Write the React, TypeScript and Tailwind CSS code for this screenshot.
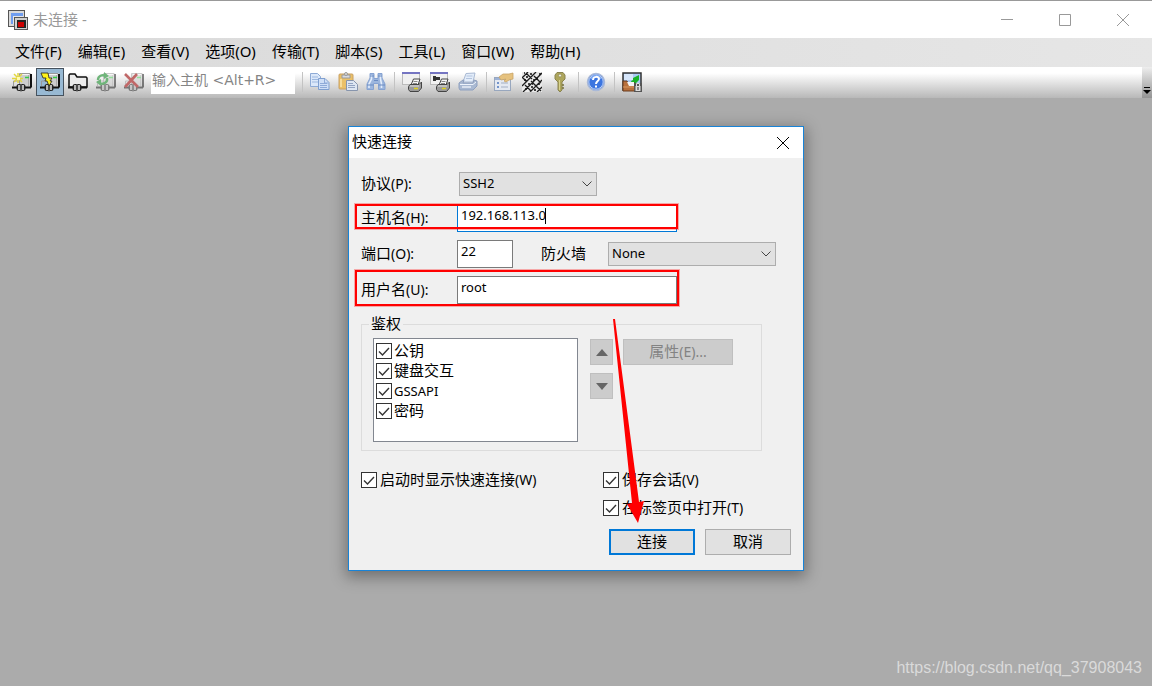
import type { ReactNode } from "react";

const menus = [
  "文件(F)",
  "编辑(E)",
  "查看(V)",
  "选项(O)",
  "传输(T)",
  "脚本(S)",
  "工具(L)",
  "窗口(W)",
  "帮助(H)",
];

const authMethods = ["公钥", "键盘交互", "GSSAPI", "密码"];

const Icon = ({ children }: { children: ReactNode }) => (
  <svg width="20" height="20" viewBox="0 0 20 20" aria-hidden="true">
    {children}
  </svg>
);

const Plug = () => (
  <g>
    <path d="M0 15.500h5M13 15.500h6" stroke="#111" strokeWidth="2" />
    <rect x="4.500" y="12" width="9" height="7" rx="2.500" fill="#222" />
    <path d="M7 13v5M11 13v5" stroke="#ddd" strokeWidth="1.600" />
    <path d="M9 12v8" stroke="#777" />
  </g>
);

const Host = () => (
  <g>
    <path d="M1.5 14V9h6" fill="none" stroke="#999" />
    <rect x="8" y="1" width="11" height="14" rx="1" fill="#cdcdcd" />
    <path d="M7.500 13V1.500H18" fill="none" stroke="#999" />
    <path d="M9 2.500h8" stroke="#f4f4f4" />
    <path d="M16.500 3v11" stroke="#aaa" />
    <path d="M19 2v13.500" stroke="#111" strokeWidth="2" />
    <path d="M13 5.500h4" stroke="#3c4" strokeWidth="1.500" />
    <Plug />
  </g>
);

const ConnectIcon = () => (
  <Icon>
    <Host />
    <path d="M6 1v10M0 6.500h11M2 2l8 8M10 2l-8 8" stroke="#e2d640" strokeWidth="1.500" />
    <path d="M5 5h3v3H5z" fill="#fffbb0" />
  </Icon>
);

const QuickConnectIcon = () => (
  <Icon>
    <Host />
    <path d="M1 1h7l1 5h3l-2 3h2l-3 5-2-5H5l1-3H3z" fill="#fff21a" stroke="#222" strokeWidth=".8" />
  </Icon>
);

const TabConnectIcon = () => (
  <Icon>
    <path d="M1 15V3l1-1h5l2 3h9l1 1v9z" fill="#ececec" stroke="#111" strokeWidth="1.500" />
    <Plug />
  </Icon>
);

const ReconnectIcon = () => (
  <Icon>
    <g opacity=".5">
      <Host />
    </g>
    <path d="M2 8c0-4 4-6 8-4M11 6c1 4-3 7-8 5" fill="none" stroke="#6fb57a" strokeWidth="2.400" />
    <path d="M8 0l5 4-5 3zM5 7v7L0 10z" fill="#6fb57a" />
  </Icon>
);

const DisconnectIcon = () => (
  <Icon>
    <g opacity=".5">
      <Host />
    </g>
    <path d="M1 2l13 13M13 2L1 15" stroke="#c06868" strokeWidth="2.600" />
  </Icon>
);

const CopyIcon = () => (
  <Icon>
    <path d="M.500 1.500h7l3 3v10H.500z" fill="#dbe8fa" stroke="#8eabd6" />
    <path d="M2 5h6M2 7.500h6M2 10h6" stroke="#9db8df" />
    <path d="M8.500 6.500h6.500l4 4v7H8.500z" fill="#cfdff7" stroke="#7f9fcf" />
    <path d="M10 11.500h7M10 13.500h7M10 15.500h7M14.500 7v4h4" fill="none" stroke="#8fabd8" />
  </Icon>
);

const PasteIcon = () => (
  <Icon>
    <rect x="1" y="2" width="14" height="15" rx="1" fill="#eac068" stroke="#c9a062" />
    <path d="M4 3h8v3H4z" fill="#d8dbe2" stroke="#9a9a9a" />
    <circle cx="8" cy="2" r="1.500" fill="#ddd" stroke="#999" />
    <path d="M3 7v8" stroke="#f6dc9b" strokeWidth="2" />
    <path d="M8.500 8.500h7l4 4v6h-11z" fill="#dde6f2" stroke="#8795ad" />
    <path d="M10 11.500h5M10 13.500h7M10 15.500h7" stroke="#93a4c2" />
  </Icon>
);

const FindIcon = () => (
  <Icon>
    <path
      d="M4 1.500h4v5h4v-5h4V6l3 6v5.500h-6.500v-6h-5v6H1V12l3-6z"
      fill="#9cb6de"
      stroke="#86a3d2"
    />
    <path d="M5.500 3v4L3 12v4M14.500 3v4l1 5v4" fill="none" stroke="#e3edfb" strokeWidth="1.600" />
    <path d="M1 13h6.500M12.500 13H19M8 8.500h4M4 4h4M12 4h4" stroke="#6b8cc2" />
  </Icon>
);

const SmallPrinter = () => (
  <g>
    <path d="M9 13l2.500-6h6.500l-2 6z" fill="#f6f6f6" stroke="#444" />
    <path d="M11.500 9.500h4M11 11.500h4" stroke="#888" />
    <path d="M8 12.500h9l2.500-2.500v6l-3 3.500H8l-1.500-2v-3z" fill="#9b9b9b" stroke="#444" />
    <path d="M8 14h9" stroke="#e4e4e4" />
    <path d="M12 16.500h4" stroke="#ded020" strokeWidth="1.500" />
  </g>
);

const PrintScreenIcon = () => (
  <Icon>
    <rect x=".500" y=".500" width="17" height="12" fill="#f1f1f1" stroke="#bbb" />
    <path d="M0 1h18" stroke="#7575c2" strokeWidth="2" />
    <SmallPrinter />
  </Icon>
);

const PrintSelectionIcon = () => (
  <Icon>
    <rect x=".500" y=".500" width="17" height="12" fill="#f1f1f1" stroke="#bbb" />
    <path d="M0 1h18" stroke="#7575c2" strokeWidth="2" />
    <path d="M3 4h3v1h4v3H6v1H3z" fill="#333" />
    <SmallPrinter />
  </Icon>
);

const PrintIcon = () => (
  <Icon>
    <path d="M5 10l3-8.500 9-.500-2 9z" fill="#e3edfa" stroke="#a9b9d3" />
    <path d="M8.500 4h6M8 6.500h6" stroke="#b3c4de" />
    <path d="M1 11l4-3h1l-1 3h10l1-3 3 1v5l-4 4H2l-1-2z" fill="#a9b9d2" stroke="#8ea0bf" />
    <path d="M2 12.500h13l3-2.500" fill="none" stroke="#edf3fb" />
    <path d="M4 15h9" stroke="#e9eef6" strokeWidth="1.500" />
  </Icon>
);

const PropertiesIcon = () => (
  <Icon>
    <rect x=".500" y="5.500" width="16" height="13" fill="#e4e9f1" stroke="#98a7be" />
    <path d="M1 7h15" stroke="#9db2d6" strokeWidth="2" />
    <path d="M3 11h2M3 15h2" stroke="#7394cb" strokeWidth="2" />
    <path d="M7 11h7M7 15h7" stroke="#a2afc4" />
    <path d="M5 5l4-3h6l4-1v6l-4 1-3 2-2-1 2-2-5 1z" fill="#e6c27f" stroke="#c9a568" strokeWidth=".8" />
  </Icon>
);

const KeymapIcon = () => (
  <Icon>
    <path d="M0 0h20v20H0z" fill="#e9e9e9" />
    <path
      d="M0 6l6-6M0 14l14-14M1 20l19-19M8 20l12-12M15 20l5-5M0 5l5 5M4 1l6 6M9 9l5 5M12 4l7 7M3 13l6 6M13 13l6 6"
      stroke="#1c1c1c"
      strokeWidth="1.300"
    />
    <path
      d="M2 8h2M5 4v2M8 2h2M11 8h2M15 6v2M6 12h2M9 15h2M16 12h2M13 17v2M3 17h2M17 2h2M2 1h1M10 12h1"
      stroke="#111"
      strokeWidth="1.600"
    />
  </Icon>
);

const KeyIcon = () => (
  <Icon>
    <path d="M7 .500h6L15 3v4l-3 3v8l-2 2-2-2v-8L5 7V3z" fill="#aea65c" stroke="#8a8450" />
    <circle cx="10" cy="3.500" r="1.500" fill="#ededdc" stroke="#77713c" strokeWidth=".5" />
    <path d="M9.500 8v10" stroke="#d8d28b" />
    <path d="M12 13h2M12 16h2" stroke="#77713c" strokeWidth="1.500" />
  </Icon>
);

const HelpIcon = () => (
  <Icon>
    <circle cx="10" cy="10" r="8.500" fill="#3c75e0" stroke="#a9b9d8" strokeWidth="1.500" />
    <circle cx="10" cy="10" r="7.200" fill="none" stroke="#d4e2fa" strokeWidth=".8" />
    <path d="M5 7a5.500 5.500 0 0 1 10 0" fill="none" stroke="#7ea9f3" strokeWidth="1.500" />
    <path d="M7 8c0-4 6-4 6-1 0 2-3 2-3 5" fill="none" stroke="#fff" strokeWidth="2" />
    <rect x="9" y="13.500" width="2" height="2" fill="#fff" />
  </Icon>
);

const TransferIcon = () => (
  <Icon>
    <rect x="1" y="1" width="18" height="17" fill="#a9caf5" stroke="#333" strokeWidth="1.500" />
    <path d="M2 2h9v6H2z" fill="#d6e6fb" />
    <path d="M9 9l2-1V6l6-3v5l-3 3-4 1z" fill="#18b428" />
    <path d="M1 9h4l1 2h7v8H1z" fill="#b8703c" stroke="#683b1c" />
    <path d="M1 15h11" stroke="#d89860" />
    <path d="M5 10h7v4H7z" fill="#f4f4f4" />
    <path d="M12 11h8v9h-8z" fill="#555" />
    <path d="M14.500 14v-2.500h3V14" fill="none" stroke="#ddd" />
    <path d="M13.500 14h5v5h-5z" fill="#ddd" />
    <path d="M16 15v3" stroke="#333" />
  </Icon>
);

interface ToolButtonProps {
  label: string;
  active?: boolean;
  children: ReactNode;
}

const ToolButton = ({ label, active, children }: ToolButtonProps) => (
  <button
    type="button"
    aria-label={label}
    className={
      active
        ? "flex size-7 shrink-0 items-center justify-center border border-[#46525e] bg-[#98b9d3]"
        : "flex size-7 shrink-0 items-center justify-center"
    }
  >
    {children}
  </button>
);

const Separator = () => (
  <div className="flex h-7 w-2 shrink-0 items-center justify-center">
    <div className="h-5 w-px bg-[#c3c3c3]" />
  </div>
);

const TitleBar = () => (
  <header className="flex h-[38px] items-center border-t border-[#999] bg-white pl-2 text-[15px] text-[#999]">
    <Icon>
      <path d="M0 0h17v17H0z" fill="#555" />
      <path d="M1 1h15v15H1z" fill="#d9d9d9" />
      <path d="M3 3h12v11H3z" fill="#6f9df0" />
      <path d="M5 6h10v8H5z" fill="#e6e6e6" />
      <path d="M6 7h14v13H6z" fill="#555" />
      <path d="M7 8h12v11H7z" fill="#d0d0d0" />
      <path d="M9 10h9v8H9z" fill="#222" />
      <path d="M10 12h6v5h-6z" fill="#c00" />
    </Icon>
    <h1 className="flex-1 pl-[5px]">未连接 -</h1>
    <button type="button" aria-label="最小化" className="flex h-full w-[58px] items-center justify-center">
      <svg width="12" height="12">
        <path d="M0 5.500h12" stroke="#999" />
      </svg>
    </button>
    <button type="button" aria-label="最大化" className="flex h-full w-[58px] items-center justify-center">
      <svg width="12" height="12">
        <path d="M.500 .500h11v11H.500z" fill="none" stroke="#999" />
      </svg>
    </button>
    <button type="button" aria-label="关闭" className="flex h-full w-[58px] items-center justify-center">
      <svg width="12" height="12">
        <path d="M0 0l12 12M12 0L0 12" stroke="#999" />
      </svg>
    </button>
  </header>
);

const MenuBar = () => (
  <nav className="flex h-[29px] items-center gap-4 bg-linear-to-r from-[#dadada] to-[#e6e6e6] pb-0.5 pl-[15px] text-[15px] text-black">
    {menus.map((menu) => (
      <button key={menu} type="button" className="whitespace-nowrap">
        {menu}
      </button>
    ))}
  </nav>
);

const ToolBar = () => (
  <div className="flex h-[31px] items-stretch bg-linear-to-b from-white from-20% to-[#b8b8b8]">
    <div className="flex flex-1 items-start pt-px pl-2">
      <ToolButton label="连接"><ConnectIcon /></ToolButton>
      <ToolButton label="快速连接" active><QuickConnectIcon /></ToolButton>
      <ToolButton label="在标签页中连接"><TabConnectIcon /></ToolButton>
      <ToolButton label="重新连接"><ReconnectIcon /></ToolButton>
      <ToolButton label="断开"><DisconnectIcon /></ToolButton>
      <input
        type="text"
        aria-label="输入主机"
        placeholder="输入主机 <Alt+R>"
        className="mx-[3px] h-[26px] w-36 bg-white pb-0.5 pl-px font-['DejaVu_Sans','Noto_Sans_CJK_SC',sans-serif] text-[14px] placeholder:text-[#858585] focus:outline-none"
      />
      <Separator />
      <ToolButton label="复制"><CopyIcon /></ToolButton>
      <ToolButton label="粘贴"><PasteIcon /></ToolButton>
      <ToolButton label="查找"><FindIcon /></ToolButton>
      <Separator />
      <ToolButton label="打印屏幕"><PrintScreenIcon /></ToolButton>
      <ToolButton label="打印选定内容"><PrintSelectionIcon /></ToolButton>
      <ToolButton label="打印"><PrintIcon /></ToolButton>
      <Separator />
      <ToolButton label="会话选项"><PropertiesIcon /></ToolButton>
      <ToolButton label="键盘映射"><KeymapIcon /></ToolButton>
      <ToolButton label="公钥"><KeyIcon /></ToolButton>
      <Separator />
      <ToolButton label="帮助"><HelpIcon /></ToolButton>
      <Separator />
      <ToolButton label="文件传输"><TransferIcon /></ToolButton>
    </div>
    <button
      type="button"
      aria-label="工具栏选项"
      className="flex w-2.5 items-end justify-center bg-linear-to-b from-[#eee] to-[#949494] pb-0.5"
    >
      <svg width="8" height="10">
        <path d="M1 1.500h6" stroke="#000" />
        <path d="M0 4h8L4 8z" fill="#000" />
      </svg>
    </button>
  </div>
);

// the access key is set smaller than the caption before it
const Caption = ({ text, hotkey }: { text: string; hotkey?: string }) => (
  <>
    {text}
    {hotkey && <span className="text-[14px]">{hotkey}</span>}
  </>
);

interface SelectBoxProps {
  id: string;
  value: string;
  className: string;
}

const SelectBox = ({ id, value, className }: SelectBoxProps) => (
  <div className={`relative h-6 ${className}`}>
    <select
      id={id}
      className="block h-full w-full appearance-none border border-[#adadad] bg-[#e1e1e1] px-[3px] text-[13px] text-black"
    >
      <option>{value}</option>
    </select>
    <svg className="pointer-events-none absolute top-2 right-1" width="12" height="8">
      <path d="M1.500 1.500L6 6l4.500-4.500" fill="none" stroke="#444" />
    </svg>
  </div>
);

interface CheckProps {
  children: ReactNode;
  className: string;
}

const Check = ({ children, className }: CheckProps) => (
  <label className={`flex h-5 items-center whitespace-nowrap ${className}`}>
    <span className="relative block size-4">
      <input
        type="checkbox"
        defaultChecked
        className="peer block size-4 appearance-none border border-[#333] bg-white"
      />
      <svg
        className="pointer-events-none absolute inset-0 hidden peer-checked:block"
        width="16"
        height="16"
      >
        <path d="M3 8.500l3.500 3.500L13 5" fill="none" stroke="#333" strokeWidth="1.400" />
      </svg>
    </span>
    <span className="pb-0.5">{children}</span>
  </label>
);

const ConnectDialog = () => (
  <section
    role="dialog"
    aria-labelledby="dialog-title"
    className="relative w-114 max-w-full border border-[#1883d7] bg-[#f0f0f0] text-[15px] text-black shadow-[0_4px_14px_2px_rgba(0,0,0,0.35)]"
  >
    <div className="flex h-[31px] items-center justify-between bg-white pr-3.5 pl-[3px]">
      <h2 id="dialog-title" className="pb-0.5">
        快速连接
      </h2>
      <button type="button" aria-label="关闭">
        <svg width="12" height="12">
          <path d="M0 0l12 12M12 0L0 12" stroke="#000" />
        </svg>
      </button>
    </div>

    <form className="px-3 pt-3.5 pb-[15px]">
      <div className="flex flex-col gap-2">
        <div className="flex h-6 items-center">
          <label htmlFor="protocol" className="w-24 pb-0.5">
            <Caption text="协议" hotkey="(P):" />
          </label>
          <SelectBox id="protocol" value="SSH2" className="ml-0.5 w-[138px]" />
        </div>

        <div className="relative flex h-7 items-center">
          <label htmlFor="host" className="w-24 pb-0.5">
            <Caption text="主机名" hotkey="(H):" />
          </label>
          <div className="relative h-7 w-55">
            <input
              id="host"
              type="text"
              defaultValue="192.168.113.0"
              className="block h-full w-full border border-[#0078d7] bg-white px-[3px] pb-1.5 text-[13px] outline-none"
            />
            <span className="absolute top-1 left-[88px] h-4 w-px bg-black" />
          </div>
          <div className="pointer-events-none absolute top-0 -left-1.5 h-[25px] w-[323px] border-2 border-[#f00] ring-1 ring-[#f00]/30" />
        </div>

        <div className="flex h-7 items-center">
          <label htmlFor="port" className="w-24 pb-0.5">
            <Caption text="端口" hotkey="(O):" />
          </label>
          <input
            id="port"
            type="text"
            defaultValue="22"
            className="h-full w-14 border border-[#7a7a7a] bg-white px-[3px] pb-1.5 text-[13px] outline-none"
          />
          <label htmlFor="firewall" className="w-[95px] pb-0.5 pl-7">
            防火墙
          </label>
          <SelectBox id="firewall" value="None" className="w-42" />
        </div>

        <div className="relative flex h-7 items-center">
          <label htmlFor="user" className="w-24 pb-0.5">
            <Caption text="用户名" hotkey="(U):" />
          </label>
          <input
            id="user"
            type="text"
            defaultValue="root"
            className="h-full w-55 border border-[#7a7a7a] bg-white px-[3px] pb-1.5 text-[13px] outline-none"
          />
          <div className="pointer-events-none absolute -top-1.5 -left-1.5 h-9 w-81 border-2 border-[#f00] ring-1 ring-[#f00]/30" />
        </div>
      </div>

      <fieldset className="mt-3 flex w-[401px] border border-[#dcdcdc] pt-1.5 pb-2 pl-[11px]">
        <legend className="-ml-1 px-0.5 pb-0.5 leading-[14px]">鉴权</legend>
        <div className="h-26 w-[205px] border border-[#828790] bg-white p-0.5">
          {authMethods.map((method) => (
            <Check key={method} className="gap-0.5">
              <span className={method === "GSSAPI" ? "text-[13px]" : "text-[15px]"}>{method}</span>
            </Check>
          ))}
        </div>
        <div className="ml-3 flex flex-col gap-2 pt-px">
          <button
            type="button"
            disabled
            aria-label="上移"
            className="flex h-[26px] w-[23px] items-center justify-center border border-[#bfbfbf] bg-[#ccc]"
          >
            <svg width="12" height="7">
              <path d="M0 7l6-7 6 7z" fill="#666" />
            </svg>
          </button>
          <button
            type="button"
            disabled
            aria-label="下移"
            className="flex h-[26px] w-[23px] items-center justify-center border border-[#bfbfbf] bg-[#ccc]"
          >
            <svg width="12" height="7">
              <path d="M0 0l6 7 6-7z" fill="#666" />
            </svg>
          </button>
        </div>
        <div className="ml-2.5 pt-px">
          <button
            type="button"
            disabled
            className="h-[26px] w-[110px] border border-[#bfbfbf] bg-[#ccc] pb-0.5 leading-5 text-[#838383]"
          >
            <Caption text="属性" hotkey="(E)..." />
          </button>
        </div>
      </fieldset>

      <div className="mt-[19px] grid grid-cols-[242px_1fr]">
        <Check className="gap-[3px]">
          <Caption text="启动时显示快速连接" hotkey="(W)" />
        </Check>
        <div className="flex flex-col gap-2">
          <Check className="gap-[3px]">
            <Caption text="保存会话" hotkey="(V)" />
          </Check>
          <Check className="gap-[3px]">
            <Caption text="在标签页中打开" hotkey="(T)" />
          </Check>
        </div>
      </div>

      <div className="mt-[11px] flex justify-end gap-2.5">
        <button
          type="button"
          className="h-[26px] w-[86px] border-2 border-[#0078d7] bg-[#e1e1e1] pb-0.5 leading-5"
        >
          连接
        </button>
        <button
          type="button"
          className="h-[26px] w-[86px] border border-[#adadad] bg-[#e1e1e1] pb-0.5 leading-5"
        >
          取消
        </button>
      </div>
    </form>

    {/* arrow down to the connect button */}
    <svg
      className="pointer-events-none absolute top-48 left-64"
      width="48"
      height="208"
      viewBox="0 0 48 208"
      aria-hidden="true"
    >
      <path d="M8 0h2L34 183l5-1-6 22-11-19 5-1z" fill="#f00" />
    </svg>
  </section>
);

export default function App() {
  return (
    <div className="flex min-h-screen flex-col bg-[#ababab] font-['Noto_Sans','Noto_Sans_CJK_SC',sans-serif]">
      <TitleBar />
      <MenuBar />
      <ToolBar />
      <main className="flex flex-1 flex-col items-center pt-7">
        <ConnectDialog />
        <footer className="mt-auto self-end pr-2.5 pb-1.5 font-['Liberation_Sans',sans-serif] text-[16px] leading-6 text-[#dadada]">
          https://blog.csdn.net/qq_37908043
        </footer>
      </main>
    </div>
  );
}
